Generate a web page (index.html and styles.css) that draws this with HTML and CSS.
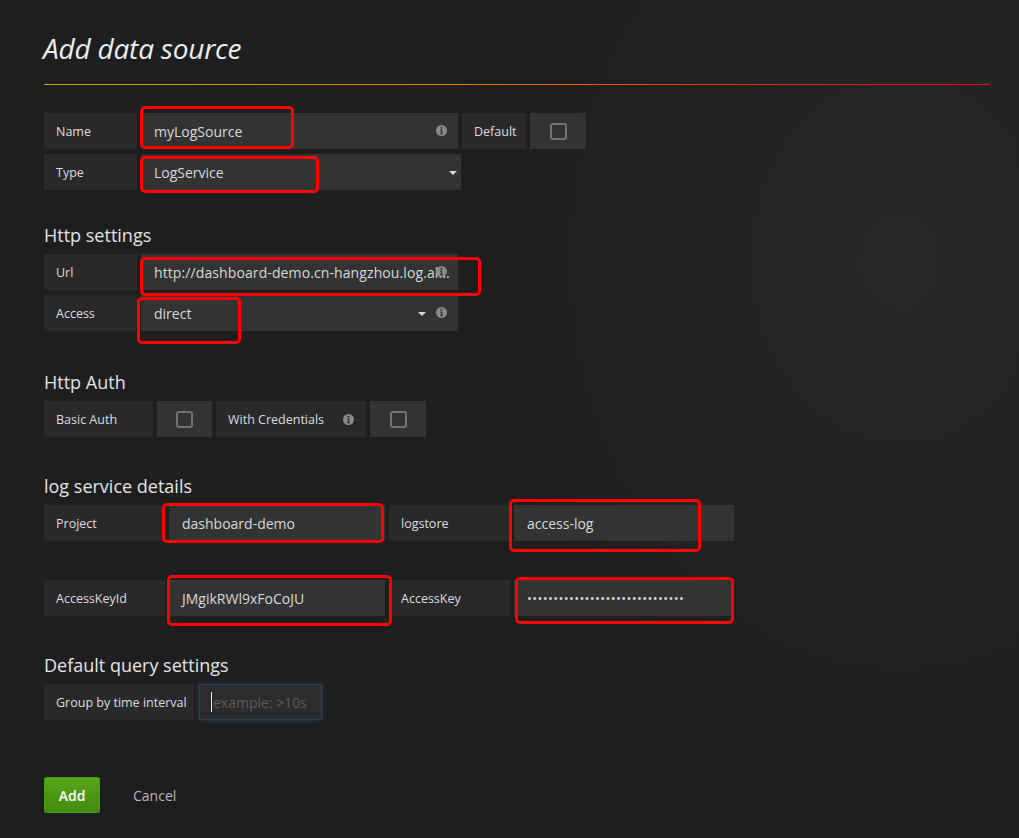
FILE: index.html
```html
<!DOCTYPE html>
<html lang="en">
<head>
<meta charset="utf-8">
<title>Add data source</title>
<link rel="stylesheet" href="styles.css">
</head>
<body>
<div class="page">
  <header class="page-header">
    <h1>Add data source</h1>
  </header>
  <div class="header-line"></div>

  <main class="form">
    <div class="row">
      <div class="label lbl-sm">Name</div>
      <div class="field fld-lg">myLogSource<svg class="info info-abs" viewBox="0 0 12 12"><circle cx="6" cy="6" r="6" fill="#8a8a8a"/><circle cx="6" cy="3.1" r="1.1" fill="#2f2f2f"/><path d="M4.6 5h2.2v4h0.8v1H4.4V9h0.9V6h-0.7z" fill="#2f2f2f"/></svg></div>
      <div class="label lbl-default">Default</div>
      <div class="check-box"><span class="check"></span></div>
    </div>
    <div class="row">
      <div class="label lbl-sm">Type</div>
      <div class="field fld-type">LogService<span class="caret caret-end"></span></div>
    </div>

    <h3 class="section-title st-http">Http settings</h3>
    <div class="row">
      <div class="label lbl-sm">Url</div>
      <div class="field fld-lg"><span class="url-text">http://dashboard-demo.cn-hangzhou.log.al...</span><svg class="info info-abs" viewBox="0 0 12 12"><circle cx="6" cy="6" r="6" fill="#8a8a8a"/><circle cx="6" cy="3.1" r="1.1" fill="#2f2f2f"/><path d="M4.6 5h2.2v4h0.8v1H4.4V9h0.9V6h-0.7z" fill="#2f2f2f"/></svg></div>
    </div>
    <div class="row">
      <div class="label lbl-sm">Access</div>
      <div class="field fld-lg">direct<span class="caret caret-access"></span><svg class="info info-abs" viewBox="0 0 12 12"><circle cx="6" cy="6" r="6" fill="#8a8a8a"/><circle cx="6" cy="3.1" r="1.1" fill="#2f2f2f"/><path d="M4.6 5h2.2v4h0.8v1H4.4V9h0.9V6h-0.7z" fill="#2f2f2f"/></svg></div>
    </div>

    <h3 class="section-title st-auth">Http Auth</h3>
    <div class="row">
      <div class="label lbl-basic">Basic Auth</div>
      <div class="check-box cb-narrow"><span class="check"></span></div>
      <div class="label lbl-lg lbl-split">With Credentials<svg class="info" viewBox="0 0 12 12"><circle cx="6" cy="6" r="6" fill="#8a8a8a"/><circle cx="6" cy="3.1" r="1.1" fill="#292929"/><path d="M4.6 5h2.2v4h0.8v1H4.4V9h0.9V6h-0.7z" fill="#292929"/></svg></div>
      <div class="check-box"><span class="check"></span></div>
    </div>

    <h3 class="section-title st-log">log service details</h3>
    <div class="row">
      <div class="label lbl-md">Project</div>
      <div class="field fld-md">dashboard-demo</div>
      <div class="label lbl-md">logstore</div>
      <div class="field fld-md2">access-log</div>
    </div>
    <div class="row row-spaced">
      <div class="label lbl-md">AccessKeyId</div>
      <div class="field fld-md">JMgikRWl9xFoCoJU</div>
      <div class="label lbl-md">AccessKey</div>
      <div class="field fld-md2 dots">••••••••••••••••••••••••••••••</div>
    </div>

    <h3 class="section-title st-query">Default query settings</h3>
    <div class="row">
      <div class="label lbl-lg">Group by time interval</div>
      <div class="field fld-sm focus"><span class="cursor"></span><span class="placeholder">example: &gt;10s</span></div>
    </div>

    <div class="actions">
      <button class="btn-add" type="button">Add</button>
      <span class="btn-cancel">Cancel</span>
    </div>
  </main>

  <div class="mark mark-name"></div>
  <div class="mark mark-type"></div>
  <div class="mark mark-url"></div>
  <div class="mark mark-access"></div>
  <div class="mark mark-project"></div>
  <div class="mark mark-logstore"></div>
  <div class="mark mark-keyid"></div>
  <div class="mark mark-key"></div>
</div>
</body>
</html>
```

FILE: styles.css
```css
* { box-sizing: border-box; }

html, body {
  margin: 0;
  background: #1f1e1f;
}

body {
  font-family: "Open Sans", "DejaVu Sans", sans-serif;
  color: #d8d9da;
  width: 1019px;
  height: 838px;
  overflow: hidden;
}

.page {
  position: relative;
  height: 838px;
  padding: 0 29px 0 44px;
  background:
    radial-gradient(ellipse 420px 520px at 900px 260px, rgba(60, 56, 56, 0.35), rgba(31, 30, 31, 0) 100%),
    #1f1e1f;
}

.page-header {
  padding-top: 29px;
  padding-bottom: 17px;
}

.page-header h1 {
  margin: 0 0 0 -1px;
  font-size: 28px;
  font-style: italic;
  font-weight: 400;
  line-height: 38px;
  color: #eceff2;
  letter-spacing: -0.2px;
}

.header-line {
  height: 1px;
  background: linear-gradient(to right, #c9a200 0%, #df7a00 45%, #e02a08 80%, #e00f0f 100%);
}

.form {
  margin-top: 28px;
}

.row {
  display: flex;
  gap: 4px;
  height: 36px;
}

.row + .row { margin-top: 5px; }
.row.row-spaced { margin-top: 39px; }

.label {
  background: #292929;
  padding: 0 12px;
  display: flex;
  align-items: center;
  font-size: 12.5px;
  color: #dcdde0;
  white-space: nowrap;
}

.lbl-sm { width: 93px; }
.lbl-default { width: 64px; }
.lbl-basic { width: 109px; }
.lbl-md { width: 121px; }
.lbl-lg { width: 150px; }
.lbl-split { justify-content: space-between; }

.field {
  position: relative;
  background: #333333;
  padding: 0 13px;
  display: flex;
  align-items: center;
  font-size: 14px;
  color: #d8d9da;
  white-space: nowrap;
}

.fld-lg { width: 317px; }
.fld-type { width: 320px; }
.fld-md { width: 216px; }
.fld-md2 { width: 220px; }
.fld-sm { width: 123px; margin-left: 1px; }

.url-text {
  letter-spacing: 0.1px;
}

.dots {
  font-size: 13px;
  letter-spacing: 0.35px;
}

.info {
  width: 11px;
  height: 11px;
  flex: none;
}

.info-abs {
  position: absolute;
  right: 11px;
  top: 12px;
}

.caret {
  position: absolute;
  top: 17px;
  width: 0;
  height: 0;
  border-left: 4px solid transparent;
  border-right: 4px solid transparent;
  border-top: 4px solid #d8d9da;
}

.caret-end { right: 4px; }
.caret-access { right: 32px; }

.check-box {
  width: 56px;
  background: #333333;
  display: flex;
  align-items: center;
  justify-content: center;
}

.cb-narrow { width: 55px; }

.check {
  width: 17px;
  height: 17px;
  border: 2px solid #737373;
  border-radius: 3px;
}

.section-title {
  margin: 0 0 9px;
  font-size: 18px;
  font-weight: 400;
  line-height: 20px;
  color: #e3e4e6;
}

.st-http { margin-top: 35px; }
.st-auth { margin-top: 41px; }
.st-log { margin-top: 39px; }
.st-query { margin-top: 39px; }

.focus {
  background: #2c2c2c;
  border: 1px solid #24435e;
  box-shadow: 0 0 5px rgba(60, 130, 200, 0.35);
  padding-left: 11px;
}

.cursor {
  width: 1px;
  height: 20px;
  background: #e8e8e8;
  margin-right: 1px;
}

.placeholder {
  color: #5b5b5b;
}

.actions {
  margin-top: 57px;
  display: flex;
  align-items: center;
}

.btn-add {
  width: 56px;
  height: 36px;
  border: 1px solid #4a9a12;
  border-radius: 2px;
  background: linear-gradient(to bottom, #58a61a, #438b0d);
  color: #ffffff;
  font-family: "Open Sans", "DejaVu Sans", sans-serif;
  font-size: 14px;
  font-weight: 600;
  padding: 0;
}

.btn-cancel {
  margin-left: 33px;
  font-size: 14px;
  color: #b8b8b8;
}

.mark {
  position: absolute;
  border: 3px solid #ff0000;
  border-radius: 5px;
}

.mark-name { left: 140px; top: 106px; width: 154px; height: 43px; }
.mark-type { left: 140px; top: 156px; width: 179px; height: 37px; }
.mark-url { left: 140px; top: 257px; width: 341px; height: 39px; }
.mark-access { left: 137px; top: 297px; width: 104px; height: 47px; }
.mark-project { left: 162px; top: 503px; width: 222px; height: 40px; }
.mark-logstore { left: 509px; top: 499px; width: 192px; height: 53px; }
.mark-keyid { left: 167px; top: 575px; width: 225px; height: 51px; }
.mark-key { left: 515px; top: 577px; width: 219px; height: 47px; }
```
